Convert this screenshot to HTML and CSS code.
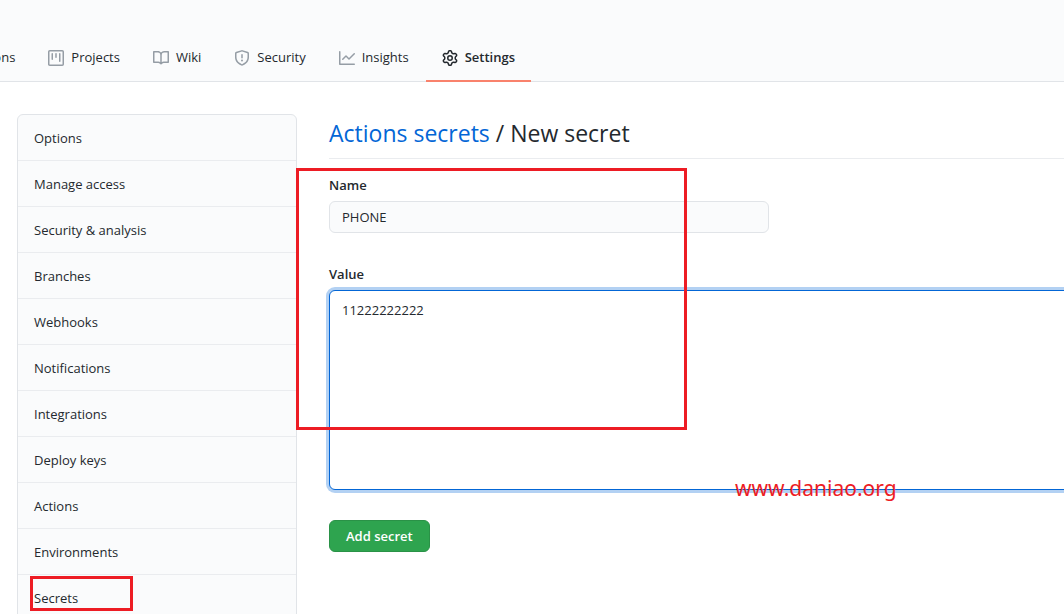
FILE: index.html
```html
<!DOCTYPE html>
<html lang="en">
<head>
<meta charset="utf-8">
<title>New secret</title>
<link rel="stylesheet" href="styles.css">
</head>
<body>
<header class="repo-header">
  <nav class="tabs" aria-label="Repository">
    <a class="tab" href="#"><svg class="icon" viewBox="0 0 16 16" aria-hidden="true"><path fill-rule="evenodd" d="M1.5 8a6.5 6.5 0 1113 0 6.5 6.5 0 01-13 0zM8 0a8 8 0 100 16A8 8 0 008 0zM6.379 5.227A.25.25 0 006 5.442v5.117a.25.25 0 00.379.214l4.264-2.559a.25.25 0 000-.428L6.379 5.227z"/></svg>Actions</a>
    <a class="tab" href="#"><svg class="icon" viewBox="0 0 16 16" aria-hidden="true"><path fill-rule="evenodd" d="M1.75 0A1.75 1.75 0 000 1.75v12.5C0 15.216.784 16 1.75 16h12.5A1.75 1.75 0 0016 14.25V1.75A1.75 1.75 0 0014.25 0H1.75zM1.5 1.75a.25.25 0 01.25-.25h12.5a.25.25 0 01.25.25v12.5a.25.25 0 01-.25.25H1.75a.25.25 0 01-.25-.25V1.75zM11.75 3a.75.75 0 00-.75.75v7.5a.75.75 0 001.5 0v-7.5a.75.75 0 00-.75-.75zm-8.25.75a.75.75 0 011.5 0v5.5a.75.75 0 01-1.5 0v-5.5zM8 3a.75.75 0 00-.75.75v3.5a.75.75 0 001.5 0v-3.5A.75.75 0 008 3z"/></svg>Projects</a>
    <a class="tab" href="#"><svg class="icon" viewBox="0 0 16 16" aria-hidden="true"><path fill-rule="evenodd" d="M0 1.75A.75.75 0 01.75 1h4.253c1.227 0 2.317.59 3 1.501A3.744 3.744 0 0111.006 1h4.245a.75.75 0 01.75.75v10.5a.75.75 0 01-.75.75h-4.507a2.25 2.25 0 00-1.591.659l-.622.621a.75.75 0 01-1.06 0l-.622-.621A2.25 2.25 0 005.258 13H.75a.75.75 0 01-.75-.75V1.75zm8.755 3a2.25 2.25 0 012.25-2.25H14.5v9h-3.757c-.71 0-1.4.201-1.992.572l.004-7.322zm-1.504 7.324l.004-5.073-.002-2.253A2.25 2.25 0 005.003 2.5H1.5v9h3.757a3.75 3.75 0 011.994.574z"/></svg>Wiki</a>
    <a class="tab" href="#"><svg class="icon" viewBox="0 0 16 16" aria-hidden="true"><path fill-rule="evenodd" d="M7.467.133a1.75 1.75 0 011.066 0l5.25 1.68A1.75 1.75 0 0115 3.48V7c0 1.566-.32 3.182-1.303 4.682-.983 1.498-2.585 2.813-5.032 3.855a1.7 1.7 0 01-1.33 0c-2.447-1.042-4.049-2.357-5.032-3.855C1.32 10.182 1 8.566 1 7V3.48a1.75 1.75 0 011.217-1.667l5.25-1.68zm.61 1.429a.25.25 0 00-.153 0l-5.25 1.68a.25.25 0 00-.174.238V7c0 1.358.275 2.666 1.057 3.86.784 1.194 2.121 2.34 4.366 3.297a.2.2 0 00.154 0c2.245-.956 3.582-2.104 4.366-3.298C13.225 9.666 13.5 8.36 13.5 7V3.48a.25.25 0 00-.174-.237l-5.25-1.68zM9 10.5a1 1 0 11-2 0 1 1 0 012 0zm-.25-5.75a.75.75 0 10-1.5 0v3a.75.75 0 001.5 0v-3z"/></svg>Security</a>
    <a class="tab" href="#"><svg class="icon" viewBox="0 0 16 16" aria-hidden="true"><path fill-rule="evenodd" d="M1.5 1.75a.75.75 0 00-1.5 0v12.5c0 .414.336.75.75.75h14.5a.75.75 0 000-1.5H1.5V1.75zm14.28 2.53a.75.75 0 00-1.06-1.06L10 7.94 7.53 5.47a.75.75 0 00-1.06 0L3.22 8.72a.75.75 0 001.06 1.06L7 7.06l2.47 2.47a.75.75 0 001.06 0l5.25-5.25z"/></svg>Insights</a>
    <a class="tab tab-current" href="#" aria-current="page"><svg class="icon" viewBox="0 0 16 16" aria-hidden="true"><path fill-rule="evenodd" d="M7.429 1.525a6.593 6.593 0 011.142 0c.036.003.108.036.137.146l.289 1.105c.147.56.55.967.997 1.189.174.086.341.183.501.29.417.278.97.423 1.53.27l1.102-.303c.11-.03.175.016.195.046.219.31.41.641.573.989.014.031.022.11-.059.19l-.815.806c-.411.406-.562.957-.53 1.456a4.588 4.588 0 010 .582c-.032.499.119 1.05.53 1.456l.815.806c.08.08.073.159.059.19a6.494 6.494 0 01-.573.99c-.02.029-.086.074-.195.045l-1.103-.303c-.559-.153-1.112-.008-1.529.27-.16.107-.327.204-.5.29-.449.222-.851.628-.998 1.189l-.289 1.105c-.029.11-.101.143-.137.146a6.613 6.613 0 01-1.142 0c-.036-.003-.108-.037-.137-.146l-.289-1.105c-.147-.56-.55-.967-.997-1.189a4.502 4.502 0 01-.501-.29c-.417-.278-.97-.423-1.53-.27l-1.102.303c-.11.03-.175-.016-.195-.046a6.492 6.492 0 01-.573-.989c-.014-.031-.022-.11.059-.19l.815-.806c.411-.406.562-.957.53-1.456a4.587 4.587 0 010-.582c.032-.499-.119-1.05-.53-1.456l-.815-.806c-.08-.08-.073-.159-.059-.19a6.44 6.44 0 01.573-.99c.02-.029.086-.075.195-.045l1.103.303c.559.153 1.112.008 1.529-.27.16-.107.327-.204.5-.29.449-.222.851-.628.998-1.189l.289-1.105c.029-.11.101-.143.137-.146zM8 0c-.236 0-.47.01-.701.03-.743.065-1.29.615-1.458 1.261l-.29 1.106c-.017.066-.078.158-.211.224a5.994 5.994 0 00-.668.386c-.123.082-.233.09-.3.071L3.27 2.776c-.644-.177-1.392.02-1.82.63a7.977 7.977 0 00-.704 1.217c-.315.675-.111 1.422.363 1.891l.815.806c.05.048.098.147.088.294a6.084 6.084 0 000 .772c.01.147-.038.246-.088.294l-.815.806c-.474.469-.678 1.216-.363 1.891.2.428.436.835.704 1.218.428.609 1.176.806 1.82.63l1.103-.303c.066-.019.176-.011.299.071.213.143.436.272.668.386.133.066.194.158.212.224l.289 1.106c.169.646.715 1.196 1.458 1.26a8.094 8.094 0 001.402 0c.743-.064 1.29-.614 1.458-1.26l.29-1.106c.017-.066.078-.158.211-.224a5.98 5.98 0 00.668-.386c.123-.082.233-.09.3-.071l1.102.302c.644.177 1.392-.02 1.82-.63.268-.382.505-.789.704-1.217.315-.675.111-1.422-.364-1.891l-.814-.806c-.05-.048-.098-.147-.088-.294a6.1 6.1 0 000-.772c-.01-.147.039-.246.088-.294l.814-.806c.475-.469.679-1.216.364-1.891a7.992 7.992 0 00-.704-1.218c-.428-.609-1.176-.806-1.82-.63l-1.103.303c-.066.019-.176.011-.299-.071a5.991 5.991 0 00-.668-.386c-.133-.066-.194-.158-.212-.224L10.16 1.29C9.99.645 9.444.095 8.701.031A8.094 8.094 0 008 0zm1.5 8a1.5 1.5 0 11-3 0 1.5 1.5 0 013 0zM11 8a3 3 0 11-6 0 3 3 0 016 0z"/></svg>Settings</a>
  </nav>
</header>
<div class="page">
  <nav class="menu" aria-label="Settings">
    <a class="menu-item" href="#">Options</a>
    <a class="menu-item" href="#">Manage access</a>
    <a class="menu-item" href="#">Security &amp; analysis</a>
    <a class="menu-item" href="#">Branches</a>
    <a class="menu-item" href="#">Webhooks</a>
    <a class="menu-item" href="#">Notifications</a>
    <a class="menu-item" href="#">Integrations</a>
    <a class="menu-item" href="#">Deploy keys</a>
    <a class="menu-item" href="#">Actions</a>
    <a class="menu-item" href="#">Environments</a>
    <a class="menu-item" href="#">Secrets</a>
  </nav>
  <main class="content">
    <h1 class="title"><a class="title-link" href="#">Actions secrets</a> / New secret</h1>
    <form class="form">
      <div class="field">
        <label class="label" for="name">Name</label>
        <input class="control name-input" id="name" type="text" value="PHONE">
      </div>
      <div class="field">
        <label class="label" for="value">Value</label>
        <textarea class="control value-input" id="value" spellcheck="false">11222222222</textarea>
      </div>
      <button class="submit" type="button">Add secret</button>
    </form>
  </main>
</div>
<div class="mark mark-form"></div>
<div class="mark mark-secrets"></div>
<div class="watermark">www.daniao.org</div>
</body>
</html>
```

FILE: styles.css
```css
* {
  box-sizing: border-box;
}

body {
  margin: 0;
  height: 100vh;
  overflow: hidden;
  position: relative;
  background: #fff;
  color: #24292e;
  font: 13px/21px "Open Sans", "Noto Sans", sans-serif;
}

a {
  color: inherit;
  text-decoration: none;
}

.repo-header {
  padding-top: 33px;
  background: #fafbfc;
  border-bottom: 1px solid #e1e4e8;
}

.tabs {
  display: flex;
  gap: 1px;
  margin: 0 0 -1px -68px;
}

.tab {
  display: flex;
  align-items: center;
  gap: 7px;
  padding: 14px 16px 12px;
  border-bottom: 2px solid transparent;
  white-space: nowrap;
}

.tab-current {
  border-bottom-color: #f9826c;
  font-weight: 600;
}

.icon {
  flex: none;
  width: 16px;
  height: 16px;
  fill: #959da5;
}

.tab-current .icon {
  fill: #24292e;
}

.page {
  display: flex;
  align-items: flex-start;
  gap: 32px;
  margin: 32px -16px 0 17px;
}

.menu {
  flex: none;
  width: 280px;
  background: #fafbfc;
  border: 1px solid #e1e4e8;
  border-radius: 6px;
}

.menu-item {
  display: block;
  padding: 13px 16px 11px;
  border-bottom: 1px solid #eaecef;
}

.menu-item:last-child {
  border-bottom: 0;
}

.content {
  flex: 1;
  min-width: 0;
}

.title {
  margin: 0 0 16px;
  padding: 1px 0 7px;
  border-bottom: 1px solid #eaecef;
  font-size: 23px;
  font-weight: 400;
  line-height: 36px;
}

.title-link {
  color: #0366d6;
}

.field {
  display: flex;
  flex-direction: column;
  align-items: flex-start;
  gap: 5px;
  margin-bottom: 31px;
}

.field:last-of-type {
  margin-bottom: 30px;
}

.label {
  font-weight: 600;
}

.control {
  padding: 5px 12px;
  border: 1px solid #e1e4e8;
  border-radius: 6px;
  color: inherit;
  font: inherit;
  outline: none;
}

.name-input {
  width: 440px;
  max-width: 100%;
  height: 32px;
  background: #fafbfc;
}

.value-input {
  display: block;
  width: 100%;
  height: 200px;
  padding: 9px 12px;
  resize: none;
  background: #fff;
  border-color: #0366d6;
  box-shadow: 0 0 0 3px #b3d1f3;
}

.submit {
  padding: 5px 16px;
  border: 1px solid #2a9247;
  border-radius: 6px;
  background: #2ea44f;
  color: #fff;
  font: inherit;
  font-weight: 600;
  line-height: 20px;
}

.mark {
  position: absolute;
  border: 3px solid #ed1c24;
  pointer-events: none;
}

.mark-form {
  left: 296px;
  top: 168px;
  width: 391px;
  height: 262px;
}

.mark-secrets {
  left: 30px;
  top: 576px;
  width: 103px;
  height: 35px;
}

.watermark {
  position: absolute;
  left: 735px;
  top: 473px;
  color: #ed1c24;
  font-family: "Noto Sans", sans-serif;
  font-size: 21px;
  line-height: 30px;
}
```
